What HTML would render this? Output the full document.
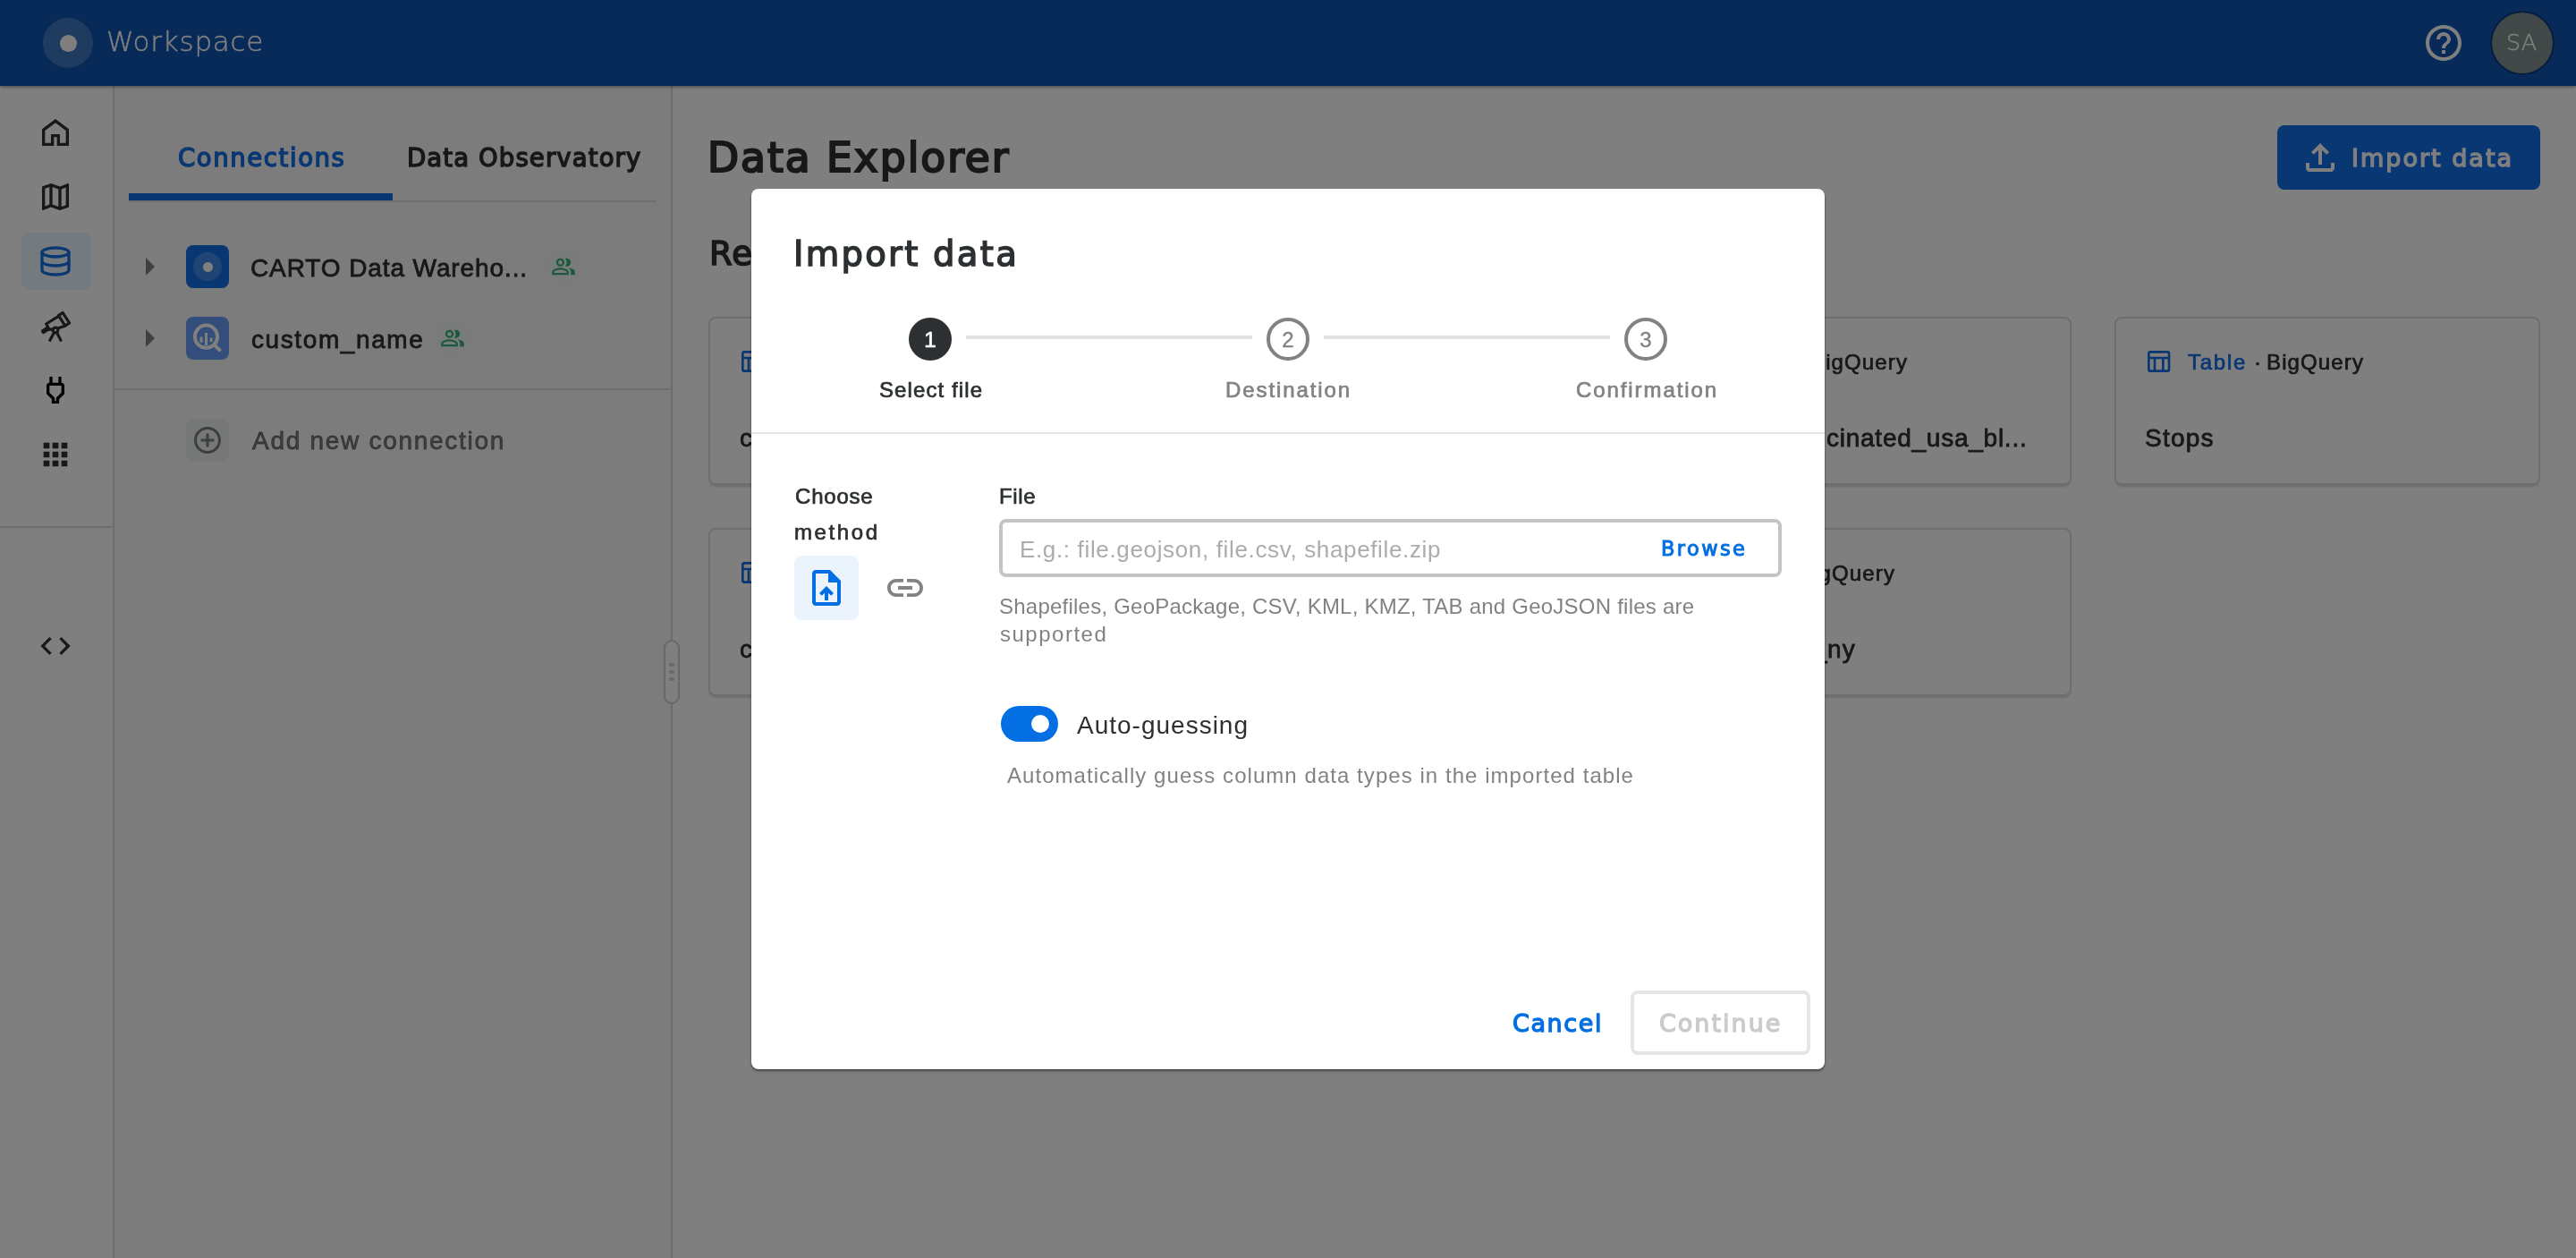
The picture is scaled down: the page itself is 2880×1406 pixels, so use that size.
<!DOCTYPE html>
<html lang="en">
<head>
<meta charset="utf-8">
<title>Workspace - Data Explorer - Import data</title>
<style>
*{box-sizing:border-box;margin:0;padding:0}
html,body{width:2880px;height:1406px;overflow:hidden;background:#fff}
body{position:relative;font-family:"Liberation Sans","DejaVu Sans",sans-serif;color:#2c3032}
.abs,.o,.m{position:absolute}
.o,.m{white-space:nowrap;line-height:1;will-change:transform}
/* .o = Open Sans stand-in (Liberation Sans); .m = Montserrat stand-in (DejaVu Sans) */
.o{font-family:"Liberation Sans",sans-serif}
.m{font-family:"DejaVu Sans","Liberation Sans",sans-serif}
.b{font-weight:700}
svg{position:absolute;display:block;overflow:visible}
#header{left:0;top:0;width:2880px;height:96px;background:#0e54b0;box-shadow:0 2px 3px rgba(0,0,0,.3)}
#nav{left:0;top:96px;width:128px;height:1310px;background:#fff;border-right:2px solid #dcdcdc}
#panel{left:128px;top:96px;width:624px;height:1310px;background:#f8f9f9;border-right:2px solid #d8d8d8}
.hr{background:#dcdcdc}
.card{background:#fff;border:2px solid #dcdcdc;border-radius:8px;box-shadow:0 3px 3px -1px rgba(0,0,0,.16)}
.ibox{border-radius:8px}
#backdrop{left:0;top:0;width:2880px;height:1406px;background:rgba(0,0,0,.5)}
#dialog{left:840px;top:211px;width:1200px;height:984px;background:#fff;border-radius:8px;box-shadow:0 2px 3px rgba(0,0,0,.4),0 1px 2px rgba(0,0,0,.2)}
</style>
</head>
<body>
<!-- ===== app shell (sits under the modal backdrop) ===== -->
<div id="nav" class="abs"></div>
<div id="panel" class="abs"></div>
<div id="header" class="abs"></div>
<div class="abs" style="left:48px;top:20px;width:56px;height:56px;border-radius:50%;background:rgba(255,255,255,.2)"></div>
<div class="abs" style="left:66.5px;top:38.5px;width:19px;height:19px;border-radius:50%;background:#fff"></div>
<div class="m" style="left:118.50px;top:31.27px;font-size:31px;letter-spacing:0.75px;color:#fff;-webkit-text-stroke:0.35px currentColor;font-weight:200;">Workspace</div>
<svg style="left:2708px;top:24px" width="48" height="48" viewBox="0 0 24 24" fill="#fff" ><path d="M11 18h2v-2h-2v2zm1-16C6.480 2 2 6.480 2 12s4.480 10 10 10 10-4.480 10-10S17.520 2 12 2zm0 18c-4.410 0-8-3.590-8-8s3.590-8 8-8 8 3.590 8 8-3.590 8-8 8zm0-14c-2.210 0-4 1.790-4 4h2c0-1.100.9-2 2-2s2 .9 2 2c0 2-3 1.750-3 5h2c0-2.250 3-2.500 3-5 0-2.210-1.790-4-4-4z"/></svg>
<div class="abs" style="left:2784px;top:12px;width:72px;height:72px;border-radius:50%;background:#809090;background-clip:padding-box;border:2px solid rgba(0,0,0,.28)"></div>
<div class="m" style="left:2802.00px;top:35.43px;font-size:25.5px;color:#fff;-webkit-text-stroke:0.4px currentColor;font-weight:200;">SA</div>
<div class="abs" style="left:24px;top:260px;width:78px;height:64px;border-radius:8px;background:rgba(3,111,226,.08)"></div>
<svg style="left:42px;top:128px" width="40" height="40" viewBox="0 0 24 24" fill="#2c3032"  color="#2c3032"><path d="M10 20H4V10.25L12 4.25L20 10.25V20H14V14.2H10Z" fill="none" stroke="currentColor" stroke-width="2" stroke-linejoin="miter"/></svg>
<svg style="left:42px;top:200px" width="40" height="40" viewBox="0 0 24 24" fill="#2c3032" ><path d="M20.5 3l-.16.03L15 5.1 9 3 3.36 4.9c-.21.07-.36.25-.36.48V20.5c0 .28.22.5.5.5l.16-.03L9 18.9l6 2.1 5.64-1.9c.21-.07.36-.25.36-.48V3.500c0-.28-.22-.5-.5-.5zM10 5.47l4 1.4v11.66l-4-1.4V5.47zm-5 .99l3-1.01v11.7l-3 1.16V6.46zm14 11.08l-3 1.01V6.86l3-1.16v11.84z"/></svg>
<svg style="left:42px;top:272px" width="40" height="40" viewBox="0 0 24 24" fill="#126fe6" color="#126fe6"><g fill="none" stroke="currentColor" stroke-width="2"><ellipse cx="12" cy="6" rx="9" ry="3"/><path d="M3 6V18C3 19.66 7.03 21 12 21S21 19.66 21 18V6"/><path d="M3 12C3 13.66 7.03 15 12 15S21 13.66 21 12"/></g></svg>
<svg style="left:42px;top:344px" width="40" height="40" viewBox="0 0 24 24" fill="#2c3032" color="#2c3032"><g fill="none" stroke="currentColor" stroke-width="1.9" stroke-linejoin="round" stroke-linecap="round"><path d="M14.03 5.13L16.89 3.3L21.38 10.22L18.52 12.08Z"/><path d="M13.2 6.2L5.8 10.8L7.3 13.6M18 12.3L13.9 13.7M7 14.7L10.2 14.3"/><path d="M3.2 15.5L6.1 13.7L6.8 14.8L3.9 16.6Z"/><circle cx="12" cy="15" r="1.7"/><path d="M10.9 16.9L8.4 21.6M13.1 16.9L15.5 21.6" stroke-linecap="square"/></g></svg>
<svg style="left:42px;top:416px" width="40" height="40" viewBox="0 0 24 24" fill="#000" ><path d="M16 9v4.66l-3.5 3.51V19h-1v-1.83L8 13.65V9h8m0-6h-2v4h-4V3H8v4h-.01C6.9 6.99 6 7.89 6 8.98v5.52L9.5 18v3h5v-3l3.5-3.51V9c0-1.1-.9-2-2-2V3z"/></svg>
<svg style="left:42px;top:488px" width="40" height="40" viewBox="0 0 24 24" fill="#2c3032" ><path d="M4 8h4V4H4v4zm6 12h4v-4h-4v4zm-6 0h4v-4H4v4zm0-6h4v-4H4v4zm6 0h4v-4h-4v4zm6-10v4h4V4h-4zm-6 4h4V4h-4v4zm6 6h4v-4h-4v4zm0 6h4v-4h-4v4z"/></svg>
<div class="abs hr" style="left:0px;top:588px;width:126px;height:2px;"></div>
<svg style="left:42px;top:702px" width="40" height="40" viewBox="0 0 24 24" fill="#2c3032" ><path d="M9.4 16.6L4.8 12l4.6-4.6L8 6l-6 6 6 6 1.4-1.4zm5.2 0l4.6-4.600-4.6-4.6L16 6l6 6-6 6-1.4-1.4z"/></svg>
<div class="abs hr" style="left:144px;top:224px;width:590px;height:2px;"></div>
<div class="abs" style="left:144px;top:216px;width:295px;height:8px;background:#126fe6"></div>
<div class="m" style="left:198.75px;top:162.99px;font-size:27.5px;letter-spacing:1.60px;color:#126fe6;-webkit-text-stroke:1.4px currentColor;">Connections</div>
<div class="m" style="left:455.00px;top:162.99px;font-size:27.5px;letter-spacing:1.13px;color:#2c3032;-webkit-text-stroke:1.4px currentColor;">Data Observatory</div>
<svg style="left:143px;top:274px" width="48" height="48" viewBox="0 0 24 24" fill="rgba(44,48,50,.6)" ><path d="M10 17l5-5-5-5v10z"/></svg>
<div class="abs ibox" style="left:208px;top:274px;width:48px;height:48px;background:#126fe6"></div>
<div class="abs" style="left:216px;top:282px;width:32px;height:32px;border-radius:50%;background:rgba(255,255,255,.2)"></div>
<div class="abs" style="left:226.5px;top:292.5px;width:11px;height:11px;border-radius:50%;background:#fff"></div>
<div class="o" style="left:280.00px;top:286.30px;font-size:28px;letter-spacing:0.90px;color:#2c3032;-webkit-text-stroke:0.8px currentColor;">CARTO Data Wareho...</div>
<div class="abs" style="left:607.5px;top:276px;width:44px;height:44px;border-radius:50%;background:rgba(71,219,153,.035)"></div>
<svg style="left:615.8px;top:284.3px" width="28" height="28" viewBox="0 0 24 24" fill="#3bb27d" ><path d="M16.67 13.13C18.04 14.06 19 15.32 19 17v3h4v-3c0-2.18-3.57-3.47-6.33-3.87zM15 12c2.210 0 4-1.79 4-4s-1.79-4-4-4c-.47 0-.91.1-1.33.24C14.5 5.27 15 6.58 15 8s-.5 2.730-1.33 3.76c.42.14.86.24 1.33.24zM9 12c2.210 0 4-1.79 4-4s-1.79-4-4-4-4 1.79-4 4 1.79 4 4 4zm0-6c1.100 0 2 .9 2 2s-.9 2-2 2-2-.9-2-2 .9-2 2-2zM9 13c-2.67 0-8 1.34-8 4v3h16v-3c0-2.66-5.33-4-8-4zm6 5H3v-.99C3.200 16.29 6.300 15 9 15s5.800 1.290 6 2v1z"/></svg>
<svg style="left:143px;top:354px" width="48" height="48" viewBox="0 0 24 24" fill="rgba(44,48,50,.6)" ><path d="M10 17l5-5-5-5v10z"/></svg>
<div class="abs ibox" style="left:208px;top:354px;width:48px;height:48px;background:#669df6"></div>
<svg style="left:208px;top:354px" width="48" height="48" viewBox="0 0 48 48" fill="none" stroke="#fff" stroke-width="4"><circle cx="22.5" cy="22.2" r="12.6"/><path d="M31.6 31.4L38.6 38.4" stroke-linecap="butt"/><path d="M22.5 18V32M17 22.4V28.8M28.1 23.500V28" stroke-width="3"/></svg>
<div class="o" style="left:281.00px;top:366.30px;font-size:28px;letter-spacing:1.60px;color:#2c3032;-webkit-text-stroke:0.8px currentColor;">custom_name</div>
<div class="abs" style="left:484px;top:356px;width:44px;height:44px;border-radius:50%;background:rgba(71,219,153,.035)"></div>
<svg style="left:491.8px;top:364.3px" width="28" height="28" viewBox="0 0 24 24" fill="#3bb27d" ><path d="M16.67 13.13C18.04 14.06 19 15.32 19 17v3h4v-3c0-2.18-3.57-3.47-6.33-3.87zM15 12c2.210 0 4-1.79 4-4s-1.79-4-4-4c-.47 0-.91.1-1.33.24C14.5 5.27 15 6.58 15 8s-.5 2.730-1.33 3.76c.42.14.86.24 1.33.24zM9 12c2.210 0 4-1.79 4-4s-1.79-4-4-4-4 1.79-4 4 1.79 4 4 4zm0-6c1.100 0 2 .9 2 2s-.9 2-2 2-2-.9-2-2 .9-2 2-2zM9 13c-2.67 0-8 1.34-8 4v3h16v-3c0-2.66-5.33-4-8-4zm6 5H3v-.99C3.200 16.29 6.300 15 9 15s5.800 1.290 6 2v1z"/></svg>
<div class="abs hr" style="left:128px;top:434px;width:622px;height:2px;"></div>
<div class="abs ibox" style="left:208px;top:468px;width:48px;height:48px;background:rgba(44,48,50,.05)"></div>
<svg style="left:214px;top:474px" width="36" height="36" viewBox="0 0 24 24" fill="rgba(44,48,50,.6)" ><path d="M13 7h-2v4H7v2h4v4h2v-4h4v-2h-4V7zm-1-5C6.480 2 2 6.480 2 12s4.480 10 10 10 10-4.480 10-10S17.520 2 12 2zm0 18c-4.410 0-8-3.590-8-8s3.590-8 8-8 8 3.590 8 8-3.590 8-8 8z"/></svg>
<div class="o" style="left:281.50px;top:479.30px;font-size:28px;letter-spacing:1.71px;color:rgba(44,48,50,.6);-webkit-text-stroke:0.8px currentColor;">Add new connection</div>
<div class="abs" style="left:742px;top:715px;width:18px;height:72px;border-radius:9px;border:2px solid #d0d0d0;background:#fff"></div>
<div class="abs" style="left:748px;top:741px;width:6px;height:4px;border-radius:2px;background:#d0d0d0"></div>
<div class="abs" style="left:748px;top:749px;width:6px;height:4px;border-radius:2px;background:#d0d0d0"></div>
<div class="abs" style="left:748px;top:757px;width:6px;height:4px;border-radius:2px;background:#d0d0d0"></div>
<div class="m" style="left:791.00px;top:154.01px;font-size:45.5px;letter-spacing:2.00px;color:#2c3032;-webkit-text-stroke:2.2px currentColor;">Data Explorer</div>
<div class="m" style="left:793.00px;top:264.95px;font-size:37px;letter-spacing:1.20px;color:#2c3032;-webkit-text-stroke:1.6px currentColor;">Recents</div>
<div class="abs" style="left:2546px;top:140px;width:294px;height:72px;border-radius:8px;background:#126fe6"></div>
<svg style="left:2570px;top:152px" width="48" height="48" viewBox="0 0 24 24" fill="#fff" ><path d="M18 15v3H6v-3H4v3c0 1.100.9 2 2 2h12c1.100 0 2-.9 2-2v-3h-2zM7 9l1.410 1.410L11 7.830V16h2V7.830l2.590 2.580L17 9l-5-5-5 5z"/></svg>
<div class="m" style="left:2629.00px;top:163.41px;font-size:27px;letter-spacing:2.00px;color:#fff;-webkit-text-stroke:1.4px currentColor;">Import data</div>
<div class="abs card" style="left:792px;top:354px;width:476px;height:188px;"></div>
<svg style="left:825px;top:388px" width="32" height="32" viewBox="0 0 24 24" fill="#126fe6" ><path d="M20 3H5c-1.100 0-2 .9-2 2v14c0 1.100.9 2 2 2h15c1.100 0 2-.9 2-2V5c0-1.100-.9-2-2-2zm0 2v3H5V5h15zm-5 14h-5v-9h5v9zM5 10h3v9H5v-9zm12 9v-9h3v9h-3z"/></svg>
<div class="o" style="left:874.00px;top:392.68px;font-size:24px;letter-spacing:1.75px;color:#126fe6;-webkit-text-stroke:0.7px currentColor;">Table</div>
<div class="o" style="left:947.50px;top:392.68px;font-size:24px;color:#2c3032;-webkit-text-stroke:0.7px currentColor;">·</div>
<div class="o" style="left:962.00px;top:392.68px;font-size:24px;letter-spacing:1.12px;color:#2c3032;-webkit-text-stroke:0.7px currentColor;">BigQuery</div>
<div class="abs card" style="left:1316px;top:354px;width:476px;height:188px;"></div>
<svg style="left:1349px;top:388px" width="32" height="32" viewBox="0 0 24 24" fill="#126fe6" ><path d="M20 3H5c-1.100 0-2 .9-2 2v14c0 1.100.9 2 2 2h15c1.100 0 2-.9 2-2V5c0-1.100-.9-2-2-2zm0 2v3H5V5h15zm-5 14h-5v-9h5v9zM5 10h3v9H5v-9zm12 9v-9h3v9h-3z"/></svg>
<div class="o" style="left:1398.00px;top:392.68px;font-size:24px;letter-spacing:1.75px;color:#126fe6;-webkit-text-stroke:0.7px currentColor;">Table</div>
<div class="o" style="left:1471.50px;top:392.68px;font-size:24px;color:#2c3032;-webkit-text-stroke:0.7px currentColor;">·</div>
<div class="o" style="left:1486.00px;top:392.68px;font-size:24px;letter-spacing:1.12px;color:#2c3032;-webkit-text-stroke:0.7px currentColor;">BigQuery</div>
<div class="abs card" style="left:1840px;top:354px;width:476px;height:188px;"></div>
<svg style="left:1873px;top:388px" width="32" height="32" viewBox="0 0 24 24" fill="#126fe6" ><path d="M20 3H5c-1.100 0-2 .9-2 2v14c0 1.100.9 2 2 2h15c1.100 0 2-.9 2-2V5c0-1.100-.9-2-2-2zm0 2v3H5V5h15zm-5 14h-5v-9h5v9zM5 10h3v9H5v-9zm12 9v-9h3v9h-3z"/></svg>
<div class="o" style="left:1922.00px;top:392.68px;font-size:24px;letter-spacing:0.50px;color:#126fe6;-webkit-text-stroke:0.7px currentColor;">Tileset</div>
<div class="o" style="left:2009.50px;top:392.68px;font-size:24px;color:#2c3032;-webkit-text-stroke:0.7px currentColor;">·</div>
<div class="o" style="left:2024.00px;top:392.68px;font-size:24px;letter-spacing:1.12px;color:#2c3032;-webkit-text-stroke:0.7px currentColor;">BigQuery</div>
<div class="abs card" style="left:2364px;top:354px;width:476px;height:188px;"></div>
<svg style="left:2397px;top:388px" width="32" height="32" viewBox="0 0 24 24" fill="#126fe6" ><path d="M20 3H5c-1.100 0-2 .9-2 2v14c0 1.100.9 2 2 2h15c1.100 0 2-.9 2-2V5c0-1.100-.9-2-2-2zm0 2v3H5V5h15zm-5 14h-5v-9h5v9zM5 10h3v9H5v-9zm12 9v-9h3v9h-3z"/></svg>
<div class="o" style="left:2446.00px;top:392.68px;font-size:24px;letter-spacing:1.75px;color:#126fe6;-webkit-text-stroke:0.7px currentColor;">Table</div>
<div class="o" style="left:2519.50px;top:392.68px;font-size:24px;color:#2c3032;-webkit-text-stroke:0.7px currentColor;">·</div>
<div class="o" style="left:2534.00px;top:392.68px;font-size:24px;letter-spacing:1.12px;color:#2c3032;-webkit-text-stroke:0.7px currentColor;">BigQuery</div>
<div class="abs card" style="left:792px;top:590px;width:476px;height:188px;"></div>
<svg style="left:825px;top:624px" width="32" height="32" viewBox="0 0 24 24" fill="#126fe6" ><path d="M20 3H5c-1.100 0-2 .9-2 2v14c0 1.100.9 2 2 2h15c1.100 0 2-.9 2-2V5c0-1.100-.9-2-2-2zm0 2v3H5V5h15zm-5 14h-5v-9h5v9zM5 10h3v9H5v-9zm12 9v-9h3v9h-3z"/></svg>
<div class="o" style="left:874.00px;top:628.68px;font-size:24px;letter-spacing:1.75px;color:#126fe6;-webkit-text-stroke:0.7px currentColor;">Table</div>
<div class="o" style="left:947.50px;top:628.68px;font-size:24px;color:#2c3032;-webkit-text-stroke:0.7px currentColor;">·</div>
<div class="o" style="left:962.00px;top:628.68px;font-size:24px;letter-spacing:1.12px;color:#2c3032;-webkit-text-stroke:0.7px currentColor;">BigQuery</div>
<div class="abs card" style="left:1316px;top:590px;width:476px;height:188px;"></div>
<svg style="left:1349px;top:624px" width="32" height="32" viewBox="0 0 24 24" fill="#126fe6" ><path d="M20 3H5c-1.100 0-2 .9-2 2v14c0 1.100.9 2 2 2h15c1.100 0 2-.9 2-2V5c0-1.100-.9-2-2-2zm0 2v3H5V5h15zm-5 14h-5v-9h5v9zM5 10h3v9H5v-9zm12 9v-9h3v9h-3z"/></svg>
<div class="o" style="left:1398.00px;top:628.68px;font-size:24px;letter-spacing:1.75px;color:#126fe6;-webkit-text-stroke:0.7px currentColor;">Table</div>
<div class="o" style="left:1471.50px;top:628.68px;font-size:24px;color:#2c3032;-webkit-text-stroke:0.7px currentColor;">·</div>
<div class="o" style="left:1486.00px;top:628.68px;font-size:24px;letter-spacing:1.12px;color:#2c3032;-webkit-text-stroke:0.7px currentColor;">BigQuery</div>
<div class="abs card" style="left:1840px;top:590px;width:476px;height:188px;"></div>
<svg style="left:1873px;top:624px" width="32" height="32" viewBox="0 0 24 24" fill="#126fe6" ><path d="M20 3H5c-1.100 0-2 .9-2 2v14c0 1.100.9 2 2 2h15c1.100 0 2-.9 2-2V5c0-1.100-.9-2-2-2zm0 2v3H5V5h15zm-5 14h-5v-9h5v9zM5 10h3v9H5v-9zm12 9v-9h3v9h-3z"/></svg>
<div class="o" style="left:1922.00px;top:628.68px;font-size:24px;letter-spacing:1.75px;color:#126fe6;-webkit-text-stroke:0.7px currentColor;">Table</div>
<div class="o" style="left:1995.50px;top:628.68px;font-size:24px;color:#2c3032;-webkit-text-stroke:0.7px currentColor;">·</div>
<div class="o" style="left:2010.00px;top:628.68px;font-size:24px;letter-spacing:1.12px;color:#2c3032;-webkit-text-stroke:0.7px currentColor;">BigQuery</div>
<div class="o" style="left:826.75px;top:475.80px;font-size:28px;letter-spacing:0.60px;color:#2c3032;-webkit-text-stroke:0.8px currentColor;">covid19_vaccinated_usa</div>
<div class="o" style="left:1350.75px;top:475.80px;font-size:28px;letter-spacing:0.60px;color:#2c3032;-webkit-text-stroke:0.8px currentColor;">retail_stores</div>
<div class="o" style="left:826.75px;top:711.80px;font-size:28px;letter-spacing:0.60px;color:#2c3032;-webkit-text-stroke:0.8px currentColor;">cell_towers_worldwide</div>
<div class="o" style="left:1350.75px;top:711.80px;font-size:28px;letter-spacing:0.60px;color:#2c3032;-webkit-text-stroke:0.8px currentColor;">sociodemographics_usa</div>
<div class="o" style="left:2397.75px;top:475.80px;font-size:28px;letter-spacing:1.25px;color:#2c3032;-webkit-text-stroke:0.8px currentColor;">Stops</div>
<div class="o" style="right:840.00px;top:475.80px;font-size:28px;letter-spacing:0.60px;color:#2c3032;-webkit-text-stroke:0.8px currentColor;">geography_vac</div>
<div class="o" style="left:2041.50px;top:475.80px;font-size:28px;letter-spacing:0.75px;color:#2c3032;-webkit-text-stroke:0.8px currentColor;">cinated_usa_bl...</div>
<div class="o" style="right:837.00px;top:711.80px;font-size:28px;letter-spacing:0.60px;color:#2c3032;-webkit-text-stroke:0.8px currentColor;">taxi_trips_</div>
<div class="o" style="left:2042.50px;top:711.80px;font-size:28px;letter-spacing:1.20px;color:#2c3032;-webkit-text-stroke:0.8px currentColor;">ny</div>

<div id="backdrop" class="abs"></div>

<!-- ===== Import data dialog ===== -->
<div id="dialog" class="abs"></div>
<div class="m" style="left:887.00px;top:264.93px;font-size:38.5px;letter-spacing:2.30px;color:#2c3032;-webkit-text-stroke:1.5px currentColor;">Import data</div>
<div class="abs" style="left:1080px;top:375px;width:320px;height:4px;background:#e0e0e0"></div>
<div class="abs" style="left:1480px;top:375px;width:320px;height:4px;background:#e0e0e0"></div>
<div class="abs" style="left:1016px;top:355px;width:48px;height:48px;border-radius:50%;background:#2c3032"></div>
<div class="abs" style="left:1416px;top:355px;width:48px;height:48px;border-radius:50%;border:4px solid #808385"></div>
<div class="abs" style="left:1816px;top:355px;width:48px;height:48px;border-radius:50%;border:4px solid #808385"></div>
<div class="o" style="left:840.00px;top:367.68px;font-size:24px;color:#fff;-webkit-text-stroke:0.7px currentColor;width:400px;text-align:center;">1</div>
<div class="o" style="left:1240.00px;top:367.68px;font-size:24px;color:#808385;-webkit-text-stroke:0.4px currentColor;width:400px;text-align:center;">2</div>
<div class="o" style="left:1640.00px;top:367.68px;font-size:24px;color:#808385;-webkit-text-stroke:0.4px currentColor;width:400px;text-align:center;">3</div>
<div class="o" style="left:982.50px;top:423.68px;font-size:24px;letter-spacing:1.10px;color:#2c3032;-webkit-text-stroke:0.7px currentColor;">Select file</div>
<div class="o" style="left:1370.00px;top:423.68px;font-size:24px;letter-spacing:1.90px;color:#808385;-webkit-text-stroke:0.7px currentColor;">Destination</div>
<div class="o" style="left:1761.50px;top:423.68px;font-size:24px;letter-spacing:1.91px;color:#808385;-webkit-text-stroke:0.7px currentColor;">Confirmation</div>
<div class="abs" style="left:840px;top:483px;width:1200px;height:2px;background:#e6e6e6"></div>
<div class="o" style="left:888.75px;top:543.43px;font-size:24px;letter-spacing:0.80px;color:#2c3032;-webkit-text-stroke:0.7px currentColor;">Choose</div>
<div class="o" style="left:887.75px;top:583.43px;font-size:24px;letter-spacing:2.60px;color:#2c3032;-webkit-text-stroke:0.7px currentColor;">method</div>
<div class="abs" style="left:888px;top:621px;width:72px;height:72px;border-radius:8px;background:rgba(3,111,226,.08)"></div>
<svg style="left:900px;top:633px" width="48" height="48" viewBox="0 0 24 24" fill="#036fe2" ><path d="M14 2H6c-1.100 0-2 .9-2 2v16c0 1.100.9 2 2 2h12c1.100 0 2-.9 2-2V8l-6-6zm4 18H6V4h7v5h5v11zM8 15.010l1.410 1.410L11 14.840V19h2v-4.160l1.590 1.590L16 15.010 12.010 11z"/></svg>
<svg style="left:988px;top:633px" width="48" height="48" viewBox="0 0 24 24" fill="#808385" ><path d="M3.900 12c0-1.710 1.390-3.100 3.100-3.100h4V7H7c-2.760 0-5 2.240-5 5s2.240 5 5 5h4v-1.900H7c-1.710 0-3.100-1.390-3.100-3.100zM8 13h8v-2H8v2zm9-6h-4v1.900h4c1.710 0 3.100 1.390 3.100 3.100s-1.390 3.100-3.100 3.100h-4V17h4c2.760 0 5-2.240 5-5s-2.240-5-5-5z"/></svg>
<div class="o" style="left:1117.00px;top:543.43px;font-size:24px;letter-spacing:0.67px;color:#2c3032;-webkit-text-stroke:0.7px currentColor;">File</div>
<div class="abs" style="left:1117px;top:580px;width:875px;height:65px;border-radius:8px;border:4px solid #c4c4c4;background:#fff"></div>
<div class="o" style="left:1140.00px;top:600.99px;font-size:26px;letter-spacing:0.65px;color:#abacad;">E.g.: file.geojson, file.csv, shapefile.zip</div>
<div class="m" style="left:1856.75px;top:601.72px;font-size:22.5px;letter-spacing:2.40px;color:#036fe2;-webkit-text-stroke:1.0px currentColor;">Browse</div>
<div class="o" style="left:1116.50px;top:665.93px;font-size:24px;letter-spacing:0.23px;color:#808385;">Shapefiles, GeoPackage, CSV, KML, KMZ, TAB and GeoJSON files are</div>
<div class="o" style="left:1117.50px;top:697.18px;font-size:24px;letter-spacing:1.50px;color:#808385;">supported</div>
<div class="abs" style="left:1119px;top:789px;width:64px;height:40px;border-radius:20px;background:#036fe2"></div>
<div class="abs" style="left:1153px;top:799px;width:20px;height:20px;border-radius:50%;background:#fff"></div>
<div class="o" style="left:1203.75px;top:796.80px;font-size:28px;letter-spacing:1.00px;color:#2c3032;">Auto-guessing</div>
<div class="o" style="left:1125.50px;top:855.43px;font-size:24px;letter-spacing:1.05px;color:#808385;">Automatically guess column data types in the imported table</div>
<div class="m" style="left:1691.25px;top:1129.66px;font-size:27px;letter-spacing:1.60px;color:#036fe2;-webkit-text-stroke:1.3px currentColor;">Cancel</div>
<div class="abs" style="left:1823px;top:1107px;width:201px;height:72px;border-radius:8px;border:4px solid #e4e6e5"></div>
<div class="m" style="left:1855.25px;top:1129.66px;font-size:27px;letter-spacing:2.00px;color:#cacbcc;-webkit-text-stroke:1.3px currentColor;">Continue</div>

</body>
</html>
